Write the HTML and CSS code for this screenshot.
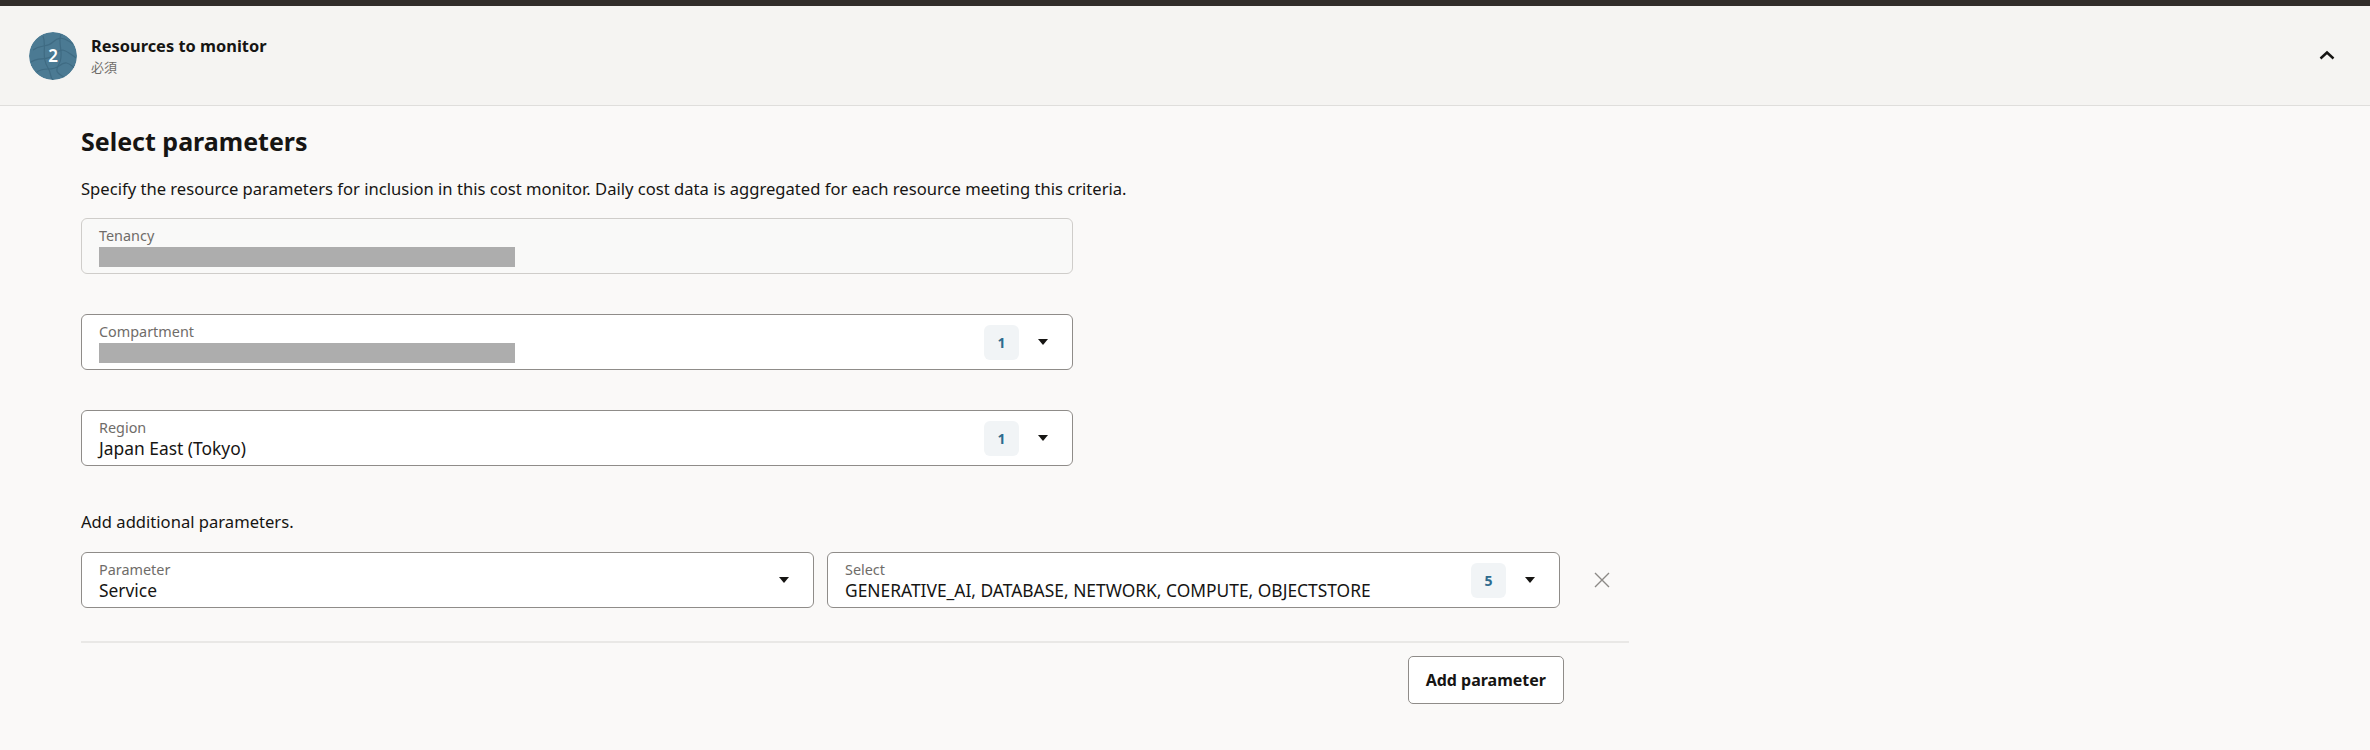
FILE: index.html
```html
<!DOCTYPE html>
<html lang="en">
<head>
<meta charset="utf-8">
<title>Resources to monitor</title>
<link rel="stylesheet" href="styles.css">
</head>
<body>
<div class="topbar"></div>
<header class="step-header">
  <div class="step-badge">
    <svg class="step-texture" viewBox="0 0 48 48" width="48" height="48" aria-hidden="true">
      <circle cx="24" cy="24" r="24" fill="#4b7a93"/>
      <path d="M4 18 C12 12 18 16 24 10 S36 6 44 12" fill="none" stroke="#3f6b83" stroke-width="1.2"/>
      <path d="M2 30 C10 24 18 30 26 22 S38 20 47 26" fill="none" stroke="#3f6b83" stroke-width="1.2"/>
      <path d="M8 40 C16 34 22 40 30 34 S40 32 46 36" fill="none" stroke="#3f6b83" stroke-width="1.2"/>
      <path d="M14 4 C18 14 12 24 18 34 S20 44 24 48" fill="none" stroke="#3f6b83" stroke-width="1.2"/>
      <path d="M32 2 C28 12 36 22 30 32 S32 42 36 46" fill="none" stroke="#3f6b83" stroke-width="1.2"/>
    </svg>
    <span class="step-num">2</span>
  </div>
  <div class="step-text">
    <div class="step-title">Resources to monitor</div>
    <div class="step-sub">必須</div>
  </div>
  <svg class="chevron" viewBox="0 0 16 10" width="16" height="10" aria-hidden="true">
    <path d="M1.5 8.5 L8 2.5 L14.5 8.5" fill="none" stroke="#161513" stroke-width="2.4"/>
  </svg>
</header>

<main class="content">
  <h2 class="section-title">Select parameters</h2>
  <p class="desc">Specify the resource parameters for inclusion in this cost monitor. Daily cost data is aggregated for each resource meeting this criteria.</p>

  <div class="field readonly wide">
    <div class="field-body">
      <div class="field-label">Tenancy</div>
      <div class="redact"></div>
    </div>
  </div>

  <div class="field wide">
    <div class="field-body">
      <div class="field-label">Compartment</div>
      <div class="redact"></div>
    </div>
    <span class="count">1</span>
    <span class="caret"></span>
  </div>

  <div class="field wide">
    <div class="field-body">
      <div class="field-label">Region</div>
      <div class="field-value">Japan East (Tokyo)</div>
    </div>
    <span class="count">1</span>
    <span class="caret"></span>
  </div>

  <p class="add-note">Add additional parameters.</p>

  <div class="param-row">
    <div class="field half">
      <div class="field-body">
        <div class="field-label">Parameter</div>
        <div class="field-value">Service</div>
      </div>
      <span class="caret"></span>
    </div>
    <div class="field half">
      <div class="field-body">
        <div class="field-label">Select</div>
        <div class="field-value">GENERATIVE_AI, DATABASE, NETWORK, COMPUTE, OBJECTSTORE</div>
      </div>
      <span class="count">5</span>
      <span class="caret"></span>
    </div>
    <svg class="remove" viewBox="0 0 18 18" width="18" height="18" aria-hidden="true">
      <path d="M2 2 L16 16 M16 2 L2 16" stroke="#8c8986" stroke-width="1.4" fill="none"/>
    </svg>
  </div>

  <div class="divider"></div>
  <div class="actions">
    <button class="btn">Add parameter</button>
  </div>
</main>
</body>
</html>
```

FILE: styles.css
```css
* { box-sizing: border-box; }
html, body {
  margin: 0;
  padding: 0;
  background: #faf9f8;
  font-family: "Noto Sans", "Noto Sans CJK JP", sans-serif;
  color: #161513;
}
.topbar {
  height: 6px;
  background: #312d2a;
}
.step-header {
  height: 100px;
  background: #f5f4f2;
  border-bottom: 1px solid #dfdedc;
  display: flex;
  align-items: center;
  padding: 0 29px;
}
.step-badge {
  width: 48px;
  height: 48px;
  position: relative;
  flex: none;
}
.step-texture { display: block; border-radius: 50%; }
.step-num {
  position: absolute;
  inset: 0;
  display: flex;
  align-items: center;
  justify-content: center;
  color: #fff;
  font-size: 17px;
  font-weight: 600;
}
.step-text {
  margin-left: 14px;
  flex: 1;
}
.step-title {
  font-size: 16.4px;
  font-weight: 700;
  line-height: 22px;
}
.step-sub {
  font-size: 13px;
  color: #6f6c69;
  line-height: 20px;
  font-family: "Noto Sans CJK JP", sans-serif;
}
.chevron { margin-right: 6px; margin-top: -2px; }

.content {
  padding: 19px 0 40px 81px;
}
.section-title {
  margin: 0;
  font-size: 25px;
  line-height: 32px;
  font-weight: 700;
}
.desc {
  margin: 20px 0 17px;
  font-size: 16.6px;
  line-height: 24px;
}
.field {
  height: 56px;
  border: 1px solid #8f8c89;
  border-radius: 6px;
  background: #fff;
  display: flex;
  align-items: center;
  padding: 0 24px 0 17px;
  margin-bottom: 40px;
}
.field.wide { width: 992px; }
.field.readonly {
  background: #f9f9f8;
  border-color: #cfcdca;
}
.field-body {
  flex: 1;
  align-self: flex-start;
  padding-top: 7px;
}
.field-label {
  font-size: 14.4px;
  line-height: 19px;
  color: #6f6c69;
}
.field-value {
  font-size: 17.4px;
  line-height: 22px;
  white-space: nowrap;
}
.redact {
  margin-top: 2px;
  width: 416px;
  height: 20px;
  background: #adadad;
}
.count {
  width: 35px;
  height: 35px;
  border-radius: 6px;
  background: #f1f4f6;
  color: #2e6b8e;
  font-size: 14px;
  font-weight: 700;
  display: flex;
  align-items: center;
  justify-content: center;
  margin-right: 19px;
}
.caret {
  width: 0;
  height: 0;
  border-left: 5px solid transparent;
  border-right: 5px solid transparent;
  border-top: 6px solid #161513;
}
.add-note {
  margin: 0 0 18px;
  padding-top: 4px;
  font-size: 16.6px;
  line-height: 24px;
}
.param-row {
  display: flex;
  align-items: center;
  gap: 13px;
  margin-bottom: 33px;
}
.param-row .field { margin-bottom: 0; }
.field.half { width: 733px; }
.remove { margin-left: 20px; }
.divider {
  width: 1548px;
  height: 2px;
  background: #e9e8e6;
}
.actions {
  width: 1483px;
  display: flex;
  justify-content: flex-end;
  padding-top: 13px;
}
.btn {
  height: 48px;
  padding: 0 17px;
  border: 1px solid #8f8c89;
  border-radius: 5px;
  background: #fff;
  font-family: "Noto Sans", sans-serif;
  font-size: 16px;
  font-weight: 700;
  color: #161513;
}
```
